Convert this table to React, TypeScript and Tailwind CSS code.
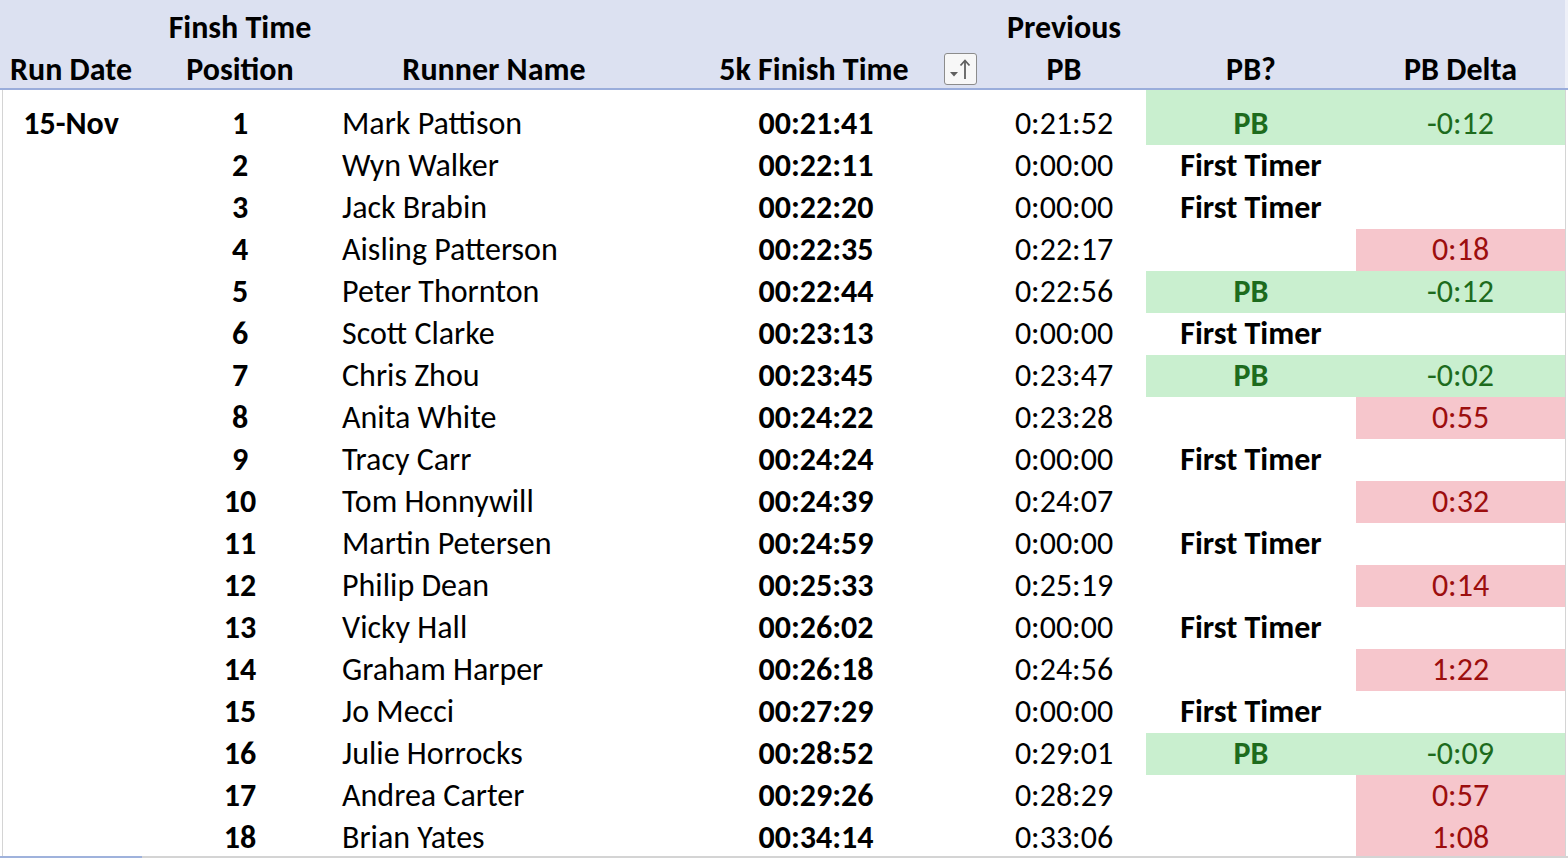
type Row = {
  pos: number;
  name: string;
  time: string;
  prev: string;
  pb?: "pb" | "first";
  delta?: string;
};

const rows: Row[] = [
  { pos: 1, name: "Mark Pattison", time: "00:21:41", prev: "0:21:52", pb: "pb", delta: "-0:12" },
  { pos: 2, name: "Wyn Walker", time: "00:22:11", prev: "0:00:00", pb: "first" },
  { pos: 3, name: "Jack Brabin", time: "00:22:20", prev: "0:00:00", pb: "first" },
  { pos: 4, name: "Aisling Patterson", time: "00:22:35", prev: "0:22:17", delta: "0:18" },
  { pos: 5, name: "Peter Thornton", time: "00:22:44", prev: "0:22:56", pb: "pb", delta: "-0:12" },
  { pos: 6, name: "Scott Clarke", time: "00:23:13", prev: "0:00:00", pb: "first" },
  { pos: 7, name: "Chris Zhou", time: "00:23:45", prev: "0:23:47", pb: "pb", delta: "-0:02" },
  { pos: 8, name: "Anita White", time: "00:24:22", prev: "0:23:28", delta: "0:55" },
  { pos: 9, name: "Tracy Carr", time: "00:24:24", prev: "0:00:00", pb: "first" },
  { pos: 10, name: "Tom Honnywill", time: "00:24:39", prev: "0:24:07", delta: "0:32" },
  { pos: 11, name: "Martin Petersen", time: "00:24:59", prev: "0:00:00", pb: "first" },
  { pos: 12, name: "Philip Dean", time: "00:25:33", prev: "0:25:19", delta: "0:14" },
  { pos: 13, name: "Vicky Hall", time: "00:26:02", prev: "0:00:00", pb: "first" },
  { pos: 14, name: "Graham Harper", time: "00:26:18", prev: "0:24:56", delta: "1:22" },
  { pos: 15, name: "Jo Mecci", time: "00:27:29", prev: "0:00:00", pb: "first" },
  { pos: 16, name: "Julie Horrocks", time: "00:28:52", prev: "0:29:01", pb: "pb", delta: "-0:09" },
  { pos: 17, name: "Andrea Carter", time: "00:29:26", prev: "0:28:29", delta: "0:57" },
  { pos: 18, name: "Brian Yates", time: "00:34:14", prev: "0:33:06", delta: "1:08" },
];

const cols = "grid grid-cols-[142px_196px_312px_332px_164px_210px_209px_3px]";

function FilterButton() {
  return (
    <div className="absolute right-[5px] bottom-[3px] flex h-[32px] w-[33px] items-center justify-center rounded-[3px] border border-[#8c8c8c] bg-[#f7f7f7]">
      <svg width="31" height="30" viewBox="0 0 31 30">
        <path d="M5 18h8l-4 4.5z" fill="#5f5f5f" />
        <path d="M20 25V7" stroke="#5f5f5f" strokeWidth="1.8" />
        <path d="M15.5 11.5L20 6.5l4.5 5" stroke="#5f5f5f" strokeWidth="1.8" fill="none" />
      </svg>
    </div>
  );
}

function HeaderCell({ top, bottom, className = "", children }: { top?: string; bottom: string; className?: string; children?: React.ReactNode }) {
  return (
    <div className={"relative flex h-[88px] flex-col items-center whitespace-nowrap " + className}>
      <div className="h-[49px] pt-[7px] leading-[42px]">{top}</div>
      <div className="h-[39px] leading-[42px]">{bottom}</div>
      {children}
    </div>
  );
}

function DataRow({ r, first, last }: { r: Row; first: boolean; last: boolean }) {
  const h = first ? "h-[55px] pt-[13px]" : last ? "h-[39px]" : "h-[42px]";
  const pbFill = r.pb === "pb" ? "bg-[#c9efcf] text-[#1d6b1d] font-bold" : "font-bold";
  const deltaFill =
    r.pb === "pb" ? "bg-[#c9efcf] text-[#1d6b1d]" : r.delta ? "bg-[#f6c6cc] text-[#9c0e0e]" : "";
  return (
    <div className={cols + " leading-[42px] whitespace-nowrap"}>
      <div className={h + " text-center font-bold shadow-[inset_2px_0_0_#fff,inset_3px_0_0_#d4d4d4]"}>
        {first ? "15-Nov" : ""}
      </div>
      <div className={h + " text-center font-bold"}>{r.pos}</div>
      <div className={h + " pl-[4px]"}>{r.name}</div>
      <div className={h + " text-center font-bold"}>{r.time}</div>
      <div className={h + " text-center"}>{r.prev}</div>
      <div className={h + " text-center " + pbFill}>
        {r.pb === "pb" ? "PB" : r.pb === "first" ? "First Timer" : ""}
      </div>
      <div className={h + " text-center " + deltaFill}>{r.delta ?? ""}</div>
      <div className={h + " border-l border-[#d4d4d4] bg-white"} />
    </div>
  );
}

export default function App() {
  return (
    <div
      className="flex h-[858px] w-[1568px] flex-col overflow-hidden bg-white text-[32px] text-black"
      style={{ fontFamily: "Carlito, Calibri, Lato, sans-serif" }}
    >
      <div className={cols + " border-b-2 border-[#9aaddb] bg-[#dce1f1] font-bold"}>
        <HeaderCell bottom="Run Date" />
        <HeaderCell top="Finsh Time" bottom="Position" />
        <HeaderCell bottom="Runner Name" />
        <HeaderCell bottom="5k Finish Time" className="pr-[4px]">
          <FilterButton />
        </HeaderCell>
        <HeaderCell top="Previous" bottom="PB" />
        <HeaderCell bottom="PB?" />
        <HeaderCell bottom="PB Delta" />
        <div className="h-[88px] bg-[#eef0f8]" />
      </div>
      {rows.map((r, i) => (
        <DataRow key={r.pos} r={r} first={i === 0} last={i === rows.length - 1} />
      ))}
      <div className="flex h-[2px]">
        <div className="w-[142px] bg-[#9fb2dc]" />
        <div className="flex-1 bg-[#d4d4d4]" />
      </div>
    </div>
  );
}
